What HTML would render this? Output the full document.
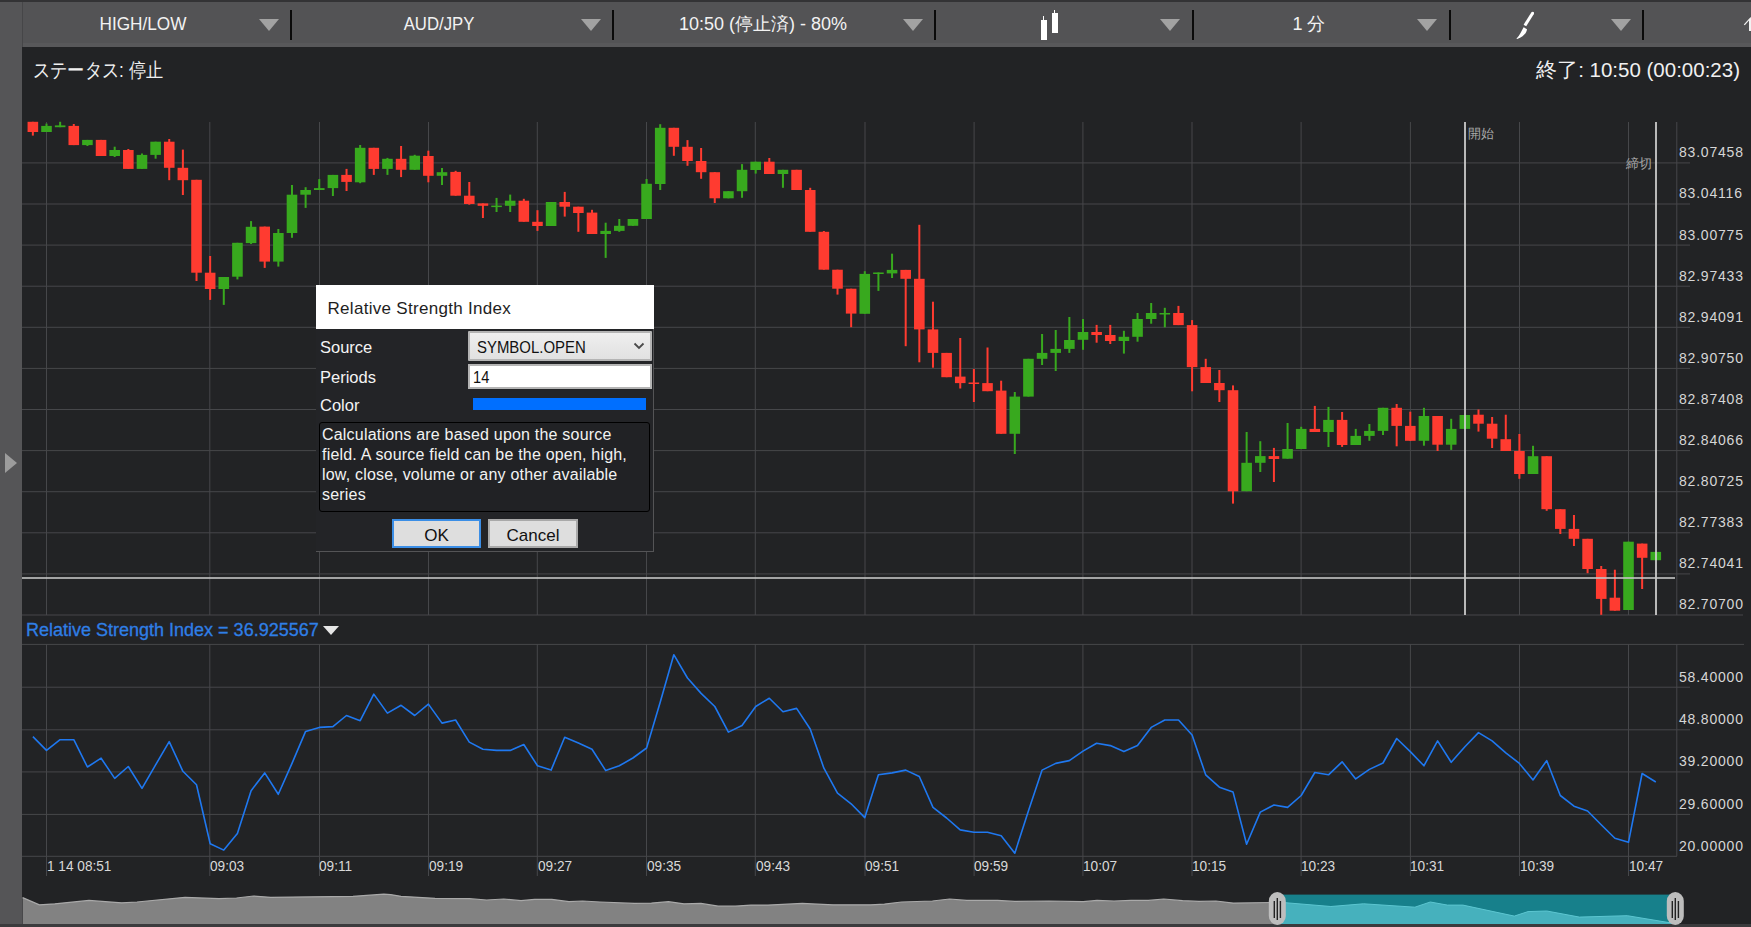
<!DOCTYPE html>
<html><head><meta charset="utf-8">
<style>
html,body{margin:0;padding:0;}
body{width:1751px;height:927px;overflow:hidden;background:#222325;position:relative;font-family:"Liberation Sans",sans-serif;}
.abs{position:absolute;}
#topstrip{position:absolute;left:0;top:0;width:1751px;height:2px;background:#333335;}
#side{position:absolute;left:0;top:2px;width:22px;height:922px;background:#555557;}
#side .tri{position:absolute;left:5px;top:451px;width:0;height:0;border-top:10.5px solid transparent;border-bottom:10.5px solid transparent;border-left:12px solid #9c9c9c;}
#bar{position:absolute;left:22px;top:2px;width:1729px;height:44.5px;background:#535355;}
.dd{position:absolute;top:0;height:44px;color:#f2f2f2;font-size:18px;line-height:44px;text-align:center;}
.tri-d{position:absolute;top:17px;width:0;height:0;border-left:10.5px solid transparent;border-right:10.5px solid transparent;border-top:12px solid #a2a2a2;}
.div{position:absolute;top:7.5px;width:2px;height:30px;background:#0a0a0a;}
svg{position:absolute;left:0;top:0;}
.tl{position:absolute;top:858px;font-size:14.5px;transform:scaleX(0.94);transform-origin:0 0;color:#d9d9d9;line-height:16px;white-space:nowrap;}
.pl{position:absolute;left:1679px;font-size:14px;color:#d6d6d6;line-height:16px;letter-spacing:0.8px;white-space:nowrap;}
#status{position:absolute;left:33px;top:58px;font-size:20px;color:#f0f0f0;line-height:24px;white-space:nowrap;transform:scaleX(0.86);transform-origin:0 0;}
#endt{position:absolute;right:11px;top:58px;font-size:20.5px;color:#f0f0f0;line-height:24px;white-space:nowrap;}
.mk{position:absolute;font-size:13px;color:#a9a9a9;line-height:14px;}
#rsil{position:absolute;left:26px;top:619px;font-size:18px;color:#2f7fe6;line-height:22px;white-space:nowrap;-webkit-text-stroke:0.3px #2f7fe6;}
#rsitri{position:absolute;left:323px;top:626px;width:0;height:0;border-left:8px solid transparent;border-right:8px solid transparent;border-top:9px solid #e6e6e6;}
#dlg{position:absolute;left:316px;top:285px;width:337px;height:266px;background:#232427;border-right:1px solid #545456;border-bottom:1px solid #545456;}
#dlg .title{position:absolute;left:0;top:0;width:338px;height:44px;background:#fff;color:#1e1e1e;font-size:17px;line-height:47px;letter-spacing:0.3px;}
#dlg .lab{position:absolute;left:4px;font-size:16.5px;color:#f4f4f4;line-height:20px;}
#dlg .sel{position:absolute;left:152px;top:46px;width:180px;height:26px;background:linear-gradient(#efefef,#e1e1e1);border:2px solid #b4b4b4;border-radius:1px;color:#111;font-size:16.5px;line-height:28px;}
#dlg .inp{position:absolute;left:152px;top:79px;width:180px;height:21px;background:#fff;border:2px solid #b4b4b4;color:#111;font-size:17px;line-height:24px;}
#dlg .color{position:absolute;left:157px;top:113px;width:173px;height:12px;background:#006fff;}
#dlg .desc{position:absolute;left:3px;top:137px;width:327px;height:88px;border:1px solid #000;border-radius:3px;background:#212225;color:#f2f2f2;font-size:16px;line-height:20px;padding:0 0 0 2px;white-space:nowrap;letter-spacing:0.2px;}
#dlg .btn{position:absolute;top:234px;height:25px;background:#dedede;border:2px solid #a9a9a9;color:#111;font-size:17px;line-height:29px;text-align:center;}
</style></head><body>
<div id="topstrip"></div>
<div id="bar">
  <div class="dd" style="left:61px;width:120px;transform:scaleX(0.956)">HIGH/LOW</div>
  <div class="tri-d" style="left:236.5px"></div>
  <div class="div" style="left:268px"></div>
  <div class="dd" style="left:356.5px;width:120px;transform:scaleX(0.93)">AUD/JPY</div>
  <div class="tri-d" style="left:558.5px"></div>
  <div class="div" style="left:590px"></div>
  <div class="dd" style="left:640px;width:202px">10:50 (停止済) - 80%</div>
  <div class="tri-d" style="left:880.5px"></div>
  <div class="div" style="left:912px"></div>
  <div class="abs" style="left:1021.3px;top:14px;width:1px;height:4px;background:#fff"></div>
  <div class="abs" style="left:1019.4px;top:18px;width:5.4px;height:19.7px;background:#fff"></div>
  <div class="abs" style="left:1031.6px;top:8px;width:1px;height:4px;background:#fff"></div>
  <div class="abs" style="left:1030px;top:11px;width:5.7px;height:20px;background:#fff"></div>
  <div class="tri-d" style="left:1138px"></div>
  <div class="div" style="left:1169.5px"></div>
  <div class="dd" style="left:1227px;width:120px">1 分</div>
  <div class="tri-d" style="left:1395px"></div>
  <div class="div" style="left:1427px"></div>
  <svg style="left:1490px;top:8px" width="22" height="32" viewBox="0 0 22 32"><path d="M21.9,4 L19.3,2.4 L11.6,14.7 L14.2,16.3 Z" fill="#fff"/><circle cx="20.6" cy="3.2" r="1.5" fill="#fff"/><path d="M11.6,17.2 L15,19.2 C14.6,23.2 10.8,27.3 5.2,29 C4.6,29.1 4.4,28.6 4.8,28.2 C7.6,25.4 9.4,21 11.6,17.2 Z" fill="#fff"/></svg>
  <div class="tri-d" style="left:1588.8px"></div>
  <div class="div" style="left:1620px"></div>
  <svg style="left:1715px;top:10px" width="14" height="22" viewBox="0 0 14 22"><path d="M6.8,12.4 L12.3,6.6 L13.8,5 L14,6.5 L14,19 L12,19 L12,8.6 L7.8,13.2 Z" fill="#f2f2f2"/></svg>
</div>
<div id="side"><div class="tri"></div></div>
<div class="abs" style="left:22px;top:2px;width:1px;height:45px;background:#464648"></div>
<div class="abs" style="left:23px;top:43px;width:1728px;height:4px;background:#58585a"></div>
<div id="status">ステータス: 停止</div>
<div id="endt">終了: 10:50 (00:00:23)</div>
<svg width="1751" height="927" viewBox="0 0 1751 927">
<rect x="46.0" y="122" width="1" height="493" fill="#46474a"/>
<rect x="46.0" y="644" width="1" height="232" fill="#46474a"/>
<rect x="209.3" y="122" width="1" height="493" fill="#46474a"/>
<rect x="209.3" y="644" width="1" height="232" fill="#46474a"/>
<rect x="319.0" y="122" width="1" height="493" fill="#46474a"/>
<rect x="319.0" y="644" width="1" height="232" fill="#46474a"/>
<rect x="428.0" y="122" width="1" height="493" fill="#46474a"/>
<rect x="428.0" y="644" width="1" height="232" fill="#46474a"/>
<rect x="536.8" y="122" width="1" height="493" fill="#46474a"/>
<rect x="536.8" y="644" width="1" height="232" fill="#46474a"/>
<rect x="646.0" y="122" width="1" height="493" fill="#46474a"/>
<rect x="646.0" y="644" width="1" height="232" fill="#46474a"/>
<rect x="754.8" y="122" width="1" height="493" fill="#46474a"/>
<rect x="754.8" y="644" width="1" height="232" fill="#46474a"/>
<rect x="864.5" y="122" width="1" height="493" fill="#46474a"/>
<rect x="864.5" y="644" width="1" height="232" fill="#46474a"/>
<rect x="973.6" y="122" width="1" height="493" fill="#46474a"/>
<rect x="973.6" y="644" width="1" height="232" fill="#46474a"/>
<rect x="1082.4" y="122" width="1" height="493" fill="#46474a"/>
<rect x="1082.4" y="644" width="1" height="232" fill="#46474a"/>
<rect x="1191.5" y="122" width="1" height="493" fill="#46474a"/>
<rect x="1191.5" y="644" width="1" height="232" fill="#46474a"/>
<rect x="1300.6" y="122" width="1" height="493" fill="#46474a"/>
<rect x="1300.6" y="644" width="1" height="232" fill="#46474a"/>
<rect x="1409.9" y="122" width="1" height="493" fill="#46474a"/>
<rect x="1409.9" y="644" width="1" height="232" fill="#46474a"/>
<rect x="1519.0" y="122" width="1" height="493" fill="#46474a"/>
<rect x="1519.0" y="644" width="1" height="232" fill="#46474a"/>
<rect x="1628.0" y="122" width="1" height="493" fill="#46474a"/>
<rect x="1628.0" y="644" width="1" height="232" fill="#46474a"/>
<rect x="22" y="162.40" width="1668" height="1" fill="#46474a"/>
<rect x="22" y="203.50" width="1668" height="1" fill="#46474a"/>
<rect x="22" y="244.60" width="1668" height="1" fill="#46474a"/>
<rect x="22" y="285.70" width="1668" height="1" fill="#46474a"/>
<rect x="22" y="326.80" width="1668" height="1" fill="#46474a"/>
<rect x="22" y="367.90" width="1668" height="1" fill="#46474a"/>
<rect x="22" y="409.00" width="1668" height="1" fill="#46474a"/>
<rect x="22" y="450.10" width="1668" height="1" fill="#46474a"/>
<rect x="22" y="491.20" width="1668" height="1" fill="#46474a"/>
<rect x="22" y="532.30" width="1668" height="1" fill="#46474a"/>
<rect x="22" y="573.40" width="1668" height="1" fill="#46474a"/>
<rect x="22" y="614.5" width="1721" height="1" fill="#46474a"/>
<rect x="22" y="643.9" width="1722" height="1" fill="#46474a"/>
<rect x="22" y="686.7" width="1668" height="1" fill="#46474a"/>
<rect x="22" y="729.3" width="1668" height="1" fill="#46474a"/>
<rect x="22" y="771.4" width="1668" height="1" fill="#46474a"/>
<rect x="22" y="813.9" width="1668" height="1" fill="#46474a"/>
<rect x="22" y="855.8" width="1655" height="1" fill="#46474a"/>
<rect x="1676.3" y="122" width="1" height="493" fill="#46474a"/>
<rect x="1676.3" y="644" width="1" height="212" fill="#46474a"/>
<rect x="31.86" y="121.8" width="2" height="13.8" fill="#ff3b30"/>
<rect x="27.56" y="121.8" width="10.6" height="10.2" fill="#ff3b30"/>
<rect x="45.50" y="123.6" width="2" height="8.4" fill="#38a91e"/>
<rect x="41.20" y="125.9" width="10.6" height="6.1" fill="#38a91e"/>
<rect x="59.14" y="121.8" width="2" height="5.4" fill="#38a91e"/>
<rect x="54.84" y="125.4" width="10.6" height="1.8" fill="#38a91e"/>
<rect x="72.78" y="124.0" width="2" height="21.1" fill="#ff3b30"/>
<rect x="68.48" y="125.9" width="10.6" height="19.2" fill="#ff3b30"/>
<rect x="86.41" y="139.9" width="2" height="6.1" fill="#38a91e"/>
<rect x="82.11" y="139.9" width="10.6" height="5.2" fill="#38a91e"/>
<rect x="100.05" y="139.9" width="2" height="16.1" fill="#ff3b30"/>
<rect x="95.75" y="139.9" width="10.6" height="16.1" fill="#ff3b30"/>
<rect x="113.69" y="146.7" width="2" height="10.3" fill="#38a91e"/>
<rect x="109.39" y="150.0" width="10.6" height="6.0" fill="#38a91e"/>
<rect x="127.33" y="149.0" width="2" height="19.9" fill="#ff3b30"/>
<rect x="123.03" y="150.0" width="10.6" height="18.9" fill="#ff3b30"/>
<rect x="140.97" y="153.5" width="2" height="15.4" fill="#38a91e"/>
<rect x="136.67" y="154.9" width="10.6" height="14.0" fill="#38a91e"/>
<rect x="154.60" y="141.7" width="2" height="17.0" fill="#38a91e"/>
<rect x="150.30" y="141.7" width="10.6" height="13.2" fill="#38a91e"/>
<rect x="168.24" y="139.0" width="2" height="41.2" fill="#ff3b30"/>
<rect x="163.94" y="141.7" width="10.6" height="26.1" fill="#ff3b30"/>
<rect x="181.88" y="149.6" width="2" height="45.4" fill="#ff3b30"/>
<rect x="177.58" y="167.8" width="10.6" height="12.4" fill="#ff3b30"/>
<rect x="195.52" y="179.8" width="2" height="101.2" fill="#ff3b30"/>
<rect x="191.22" y="179.8" width="10.6" height="92.9" fill="#ff3b30"/>
<rect x="209.16" y="256.0" width="2" height="43.9" fill="#ff3b30"/>
<rect x="204.86" y="272.7" width="10.6" height="16.3" fill="#ff3b30"/>
<rect x="222.79" y="277.0" width="2" height="27.9" fill="#38a91e"/>
<rect x="218.49" y="277.0" width="10.6" height="12.0" fill="#38a91e"/>
<rect x="236.43" y="242.8" width="2" height="36.6" fill="#38a91e"/>
<rect x="232.13" y="242.8" width="10.6" height="33.9" fill="#38a91e"/>
<rect x="250.07" y="221.1" width="2" height="22.9" fill="#38a91e"/>
<rect x="245.77" y="226.8" width="10.6" height="16.3" fill="#38a91e"/>
<rect x="263.71" y="226.6" width="2" height="41.3" fill="#ff3b30"/>
<rect x="259.41" y="226.6" width="10.6" height="35.0" fill="#ff3b30"/>
<rect x="277.35" y="229.0" width="2" height="37.6" fill="#38a91e"/>
<rect x="273.05" y="233.0" width="10.6" height="28.6" fill="#38a91e"/>
<rect x="290.98" y="185.0" width="2" height="52.8" fill="#38a91e"/>
<rect x="286.68" y="194.7" width="10.6" height="38.3" fill="#38a91e"/>
<rect x="304.62" y="187.2" width="2" height="20.7" fill="#38a91e"/>
<rect x="300.32" y="190.0" width="10.6" height="4.7" fill="#38a91e"/>
<rect x="318.26" y="179.1" width="2" height="10.9" fill="#38a91e"/>
<rect x="313.96" y="188.1" width="10.6" height="1.9" fill="#38a91e"/>
<rect x="331.90" y="174.9" width="2" height="21.1" fill="#38a91e"/>
<rect x="327.60" y="174.9" width="10.6" height="13.2" fill="#38a91e"/>
<rect x="345.54" y="168.9" width="2" height="22.1" fill="#ff3b30"/>
<rect x="341.24" y="174.9" width="10.6" height="7.0" fill="#ff3b30"/>
<rect x="359.17" y="145.0" width="2" height="38.2" fill="#38a91e"/>
<rect x="354.87" y="147.8" width="10.6" height="34.5" fill="#38a91e"/>
<rect x="372.81" y="147.8" width="2" height="27.1" fill="#ff3b30"/>
<rect x="368.51" y="147.8" width="10.6" height="21.1" fill="#ff3b30"/>
<rect x="386.45" y="157.9" width="2" height="17.0" fill="#38a91e"/>
<rect x="382.15" y="158.8" width="10.6" height="10.1" fill="#38a91e"/>
<rect x="400.09" y="146.0" width="2" height="31.1" fill="#ff3b30"/>
<rect x="395.79" y="158.8" width="10.6" height="11.0" fill="#ff3b30"/>
<rect x="413.73" y="154.8" width="2" height="15.0" fill="#38a91e"/>
<rect x="409.43" y="155.7" width="10.6" height="14.1" fill="#38a91e"/>
<rect x="427.36" y="150.7" width="2" height="31.6" fill="#ff3b30"/>
<rect x="423.06" y="156.0" width="10.6" height="19.8" fill="#ff3b30"/>
<rect x="441.00" y="168.0" width="2" height="17.0" fill="#38a91e"/>
<rect x="436.70" y="172.2" width="10.6" height="3.6" fill="#38a91e"/>
<rect x="454.64" y="170.8" width="2" height="24.9" fill="#ff3b30"/>
<rect x="450.34" y="171.9" width="10.6" height="23.8" fill="#ff3b30"/>
<rect x="468.28" y="182.0" width="2" height="22.7" fill="#ff3b30"/>
<rect x="463.98" y="195.7" width="10.6" height="8.3" fill="#ff3b30"/>
<rect x="481.92" y="203.4" width="2" height="14.6" fill="#ff3b30"/>
<rect x="477.62" y="203.4" width="10.6" height="2.4" fill="#ff3b30"/>
<rect x="495.55" y="197.9" width="2" height="14.1" fill="#38a91e"/>
<rect x="491.25" y="205.6" width="10.6" height="1.5" fill="#38a91e"/>
<rect x="509.19" y="194.6" width="2" height="17.4" fill="#38a91e"/>
<rect x="504.89" y="200.7" width="10.6" height="5.1" fill="#38a91e"/>
<rect x="522.83" y="198.8" width="2" height="22.9" fill="#ff3b30"/>
<rect x="518.53" y="200.7" width="10.6" height="21.1" fill="#ff3b30"/>
<rect x="536.47" y="210.2" width="2" height="20.7" fill="#ff3b30"/>
<rect x="532.17" y="221.8" width="10.6" height="4.2" fill="#ff3b30"/>
<rect x="550.11" y="202.0" width="2" height="24.0" fill="#38a91e"/>
<rect x="545.81" y="202.0" width="10.6" height="24.0" fill="#38a91e"/>
<rect x="563.74" y="191.9" width="2" height="24.7" fill="#ff3b30"/>
<rect x="559.44" y="202.0" width="10.6" height="4.7" fill="#ff3b30"/>
<rect x="577.38" y="206.7" width="2" height="25.1" fill="#ff3b30"/>
<rect x="573.08" y="206.7" width="10.6" height="6.3" fill="#ff3b30"/>
<rect x="591.02" y="209.8" width="2" height="24.2" fill="#ff3b30"/>
<rect x="586.72" y="212.6" width="10.6" height="21.4" fill="#ff3b30"/>
<rect x="604.66" y="222.7" width="2" height="35.2" fill="#38a91e"/>
<rect x="600.36" y="230.9" width="10.6" height="3.1" fill="#38a91e"/>
<rect x="618.30" y="219.0" width="2" height="12.8" fill="#38a91e"/>
<rect x="614.00" y="225.8" width="10.6" height="5.1" fill="#38a91e"/>
<rect x="631.93" y="219.0" width="2" height="6.8" fill="#38a91e"/>
<rect x="627.63" y="219.0" width="10.6" height="6.8" fill="#38a91e"/>
<rect x="645.57" y="179.0" width="2" height="40.0" fill="#38a91e"/>
<rect x="641.27" y="183.8" width="10.6" height="35.2" fill="#38a91e"/>
<rect x="659.21" y="124.2" width="2" height="65.8" fill="#38a91e"/>
<rect x="654.91" y="127.8" width="10.6" height="56.2" fill="#38a91e"/>
<rect x="672.85" y="127.8" width="2" height="28.0" fill="#ff3b30"/>
<rect x="668.55" y="127.8" width="10.6" height="19.0" fill="#ff3b30"/>
<rect x="686.49" y="140.1" width="2" height="25.7" fill="#ff3b30"/>
<rect x="682.19" y="146.8" width="10.6" height="14.2" fill="#ff3b30"/>
<rect x="700.12" y="148.0" width="2" height="30.8" fill="#ff3b30"/>
<rect x="695.82" y="161.0" width="10.6" height="11.2" fill="#ff3b30"/>
<rect x="713.76" y="172.2" width="2" height="30.8" fill="#ff3b30"/>
<rect x="709.46" y="172.2" width="10.6" height="26.1" fill="#ff3b30"/>
<rect x="727.40" y="191.2" width="2" height="7.1" fill="#38a91e"/>
<rect x="723.10" y="191.2" width="10.6" height="7.1" fill="#38a91e"/>
<rect x="741.04" y="164.1" width="2" height="33.7" fill="#38a91e"/>
<rect x="736.74" y="169.8" width="10.6" height="21.4" fill="#38a91e"/>
<rect x="754.68" y="161.7" width="2" height="11.9" fill="#38a91e"/>
<rect x="750.38" y="161.7" width="10.6" height="8.3" fill="#38a91e"/>
<rect x="768.31" y="158.0" width="2" height="16.0" fill="#ff3b30"/>
<rect x="764.01" y="161.7" width="10.6" height="12.3" fill="#ff3b30"/>
<rect x="781.95" y="169.8" width="2" height="18.0" fill="#38a91e"/>
<rect x="777.65" y="169.8" width="10.6" height="4.2" fill="#38a91e"/>
<rect x="795.59" y="169.8" width="2" height="20.2" fill="#ff3b30"/>
<rect x="791.29" y="169.8" width="10.6" height="20.2" fill="#ff3b30"/>
<rect x="809.23" y="187.8" width="2" height="43.9" fill="#ff3b30"/>
<rect x="804.93" y="190.0" width="10.6" height="41.8" fill="#ff3b30"/>
<rect x="822.87" y="231.0" width="2" height="38.7" fill="#ff3b30"/>
<rect x="818.57" y="231.8" width="10.6" height="37.9" fill="#ff3b30"/>
<rect x="836.50" y="269.7" width="2" height="24.9" fill="#ff3b30"/>
<rect x="832.20" y="269.7" width="10.6" height="19.0" fill="#ff3b30"/>
<rect x="850.14" y="288.7" width="2" height="38.5" fill="#ff3b30"/>
<rect x="845.84" y="288.7" width="10.6" height="24.9" fill="#ff3b30"/>
<rect x="863.78" y="271.2" width="2" height="42.6" fill="#38a91e"/>
<rect x="859.48" y="273.9" width="10.6" height="39.9" fill="#38a91e"/>
<rect x="877.42" y="272.5" width="2" height="18.4" fill="#38a91e"/>
<rect x="873.12" y="272.5" width="10.6" height="1.5" fill="#38a91e"/>
<rect x="891.06" y="253.7" width="2" height="24.3" fill="#38a91e"/>
<rect x="886.76" y="269.9" width="10.6" height="3.5" fill="#38a91e"/>
<rect x="904.69" y="269.9" width="2" height="76.3" fill="#ff3b30"/>
<rect x="900.39" y="269.9" width="10.6" height="8.9" fill="#ff3b30"/>
<rect x="918.33" y="224.8" width="2" height="137.5" fill="#ff3b30"/>
<rect x="914.03" y="278.8" width="10.6" height="50.6" fill="#ff3b30"/>
<rect x="931.97" y="301.7" width="2" height="66.0" fill="#ff3b30"/>
<rect x="927.67" y="329.4" width="10.6" height="23.5" fill="#ff3b30"/>
<rect x="945.61" y="352.9" width="2" height="24.3" fill="#ff3b30"/>
<rect x="941.31" y="352.9" width="10.6" height="24.3" fill="#ff3b30"/>
<rect x="959.25" y="338.0" width="2" height="50.5" fill="#ff3b30"/>
<rect x="954.95" y="376.6" width="10.6" height="6.5" fill="#ff3b30"/>
<rect x="972.88" y="369.0" width="2" height="33.0" fill="#ff3b30"/>
<rect x="968.58" y="382.5" width="10.6" height="1.5" fill="#ff3b30"/>
<rect x="986.52" y="347.5" width="2" height="43.7" fill="#ff3b30"/>
<rect x="982.22" y="383.1" width="10.6" height="8.1" fill="#ff3b30"/>
<rect x="1000.16" y="380.7" width="2" height="53.1" fill="#ff3b30"/>
<rect x="995.86" y="390.6" width="10.6" height="43.2" fill="#ff3b30"/>
<rect x="1013.80" y="392.0" width="2" height="62.0" fill="#38a91e"/>
<rect x="1009.50" y="396.6" width="10.6" height="37.2" fill="#38a91e"/>
<rect x="1027.44" y="358.8" width="2" height="37.8" fill="#38a91e"/>
<rect x="1023.14" y="358.8" width="10.6" height="37.8" fill="#38a91e"/>
<rect x="1041.07" y="334.0" width="2" height="31.0" fill="#38a91e"/>
<rect x="1036.77" y="352.9" width="10.6" height="5.9" fill="#38a91e"/>
<rect x="1054.71" y="330.0" width="2" height="41.0" fill="#38a91e"/>
<rect x="1050.41" y="348.9" width="10.6" height="4.0" fill="#38a91e"/>
<rect x="1068.35" y="317.0" width="2" height="35.9" fill="#38a91e"/>
<rect x="1064.05" y="340.0" width="10.6" height="8.9" fill="#38a91e"/>
<rect x="1081.99" y="319.0" width="2" height="30.8" fill="#38a91e"/>
<rect x="1077.69" y="332.0" width="10.6" height="7.8" fill="#38a91e"/>
<rect x="1095.63" y="324.9" width="2" height="17.8" fill="#ff3b30"/>
<rect x="1091.33" y="332.0" width="10.6" height="3.0" fill="#ff3b30"/>
<rect x="1109.26" y="324.9" width="2" height="19.1" fill="#ff3b30"/>
<rect x="1104.96" y="335.0" width="10.6" height="6.0" fill="#ff3b30"/>
<rect x="1122.90" y="330.8" width="2" height="22.8" fill="#38a91e"/>
<rect x="1118.60" y="336.8" width="10.6" height="4.2" fill="#38a91e"/>
<rect x="1136.54" y="313.0" width="2" height="28.7" fill="#38a91e"/>
<rect x="1132.24" y="319.0" width="10.6" height="17.8" fill="#38a91e"/>
<rect x="1150.18" y="303.0" width="2" height="20.7" fill="#38a91e"/>
<rect x="1145.88" y="313.0" width="10.6" height="6.0" fill="#38a91e"/>
<rect x="1163.82" y="307.8" width="2" height="19.5" fill="#38a91e"/>
<rect x="1159.52" y="313.0" width="10.6" height="1.5" fill="#38a91e"/>
<rect x="1177.45" y="305.9" width="2" height="19.2" fill="#ff3b30"/>
<rect x="1173.15" y="313.0" width="10.6" height="12.1" fill="#ff3b30"/>
<rect x="1191.09" y="320.1" width="2" height="71.2" fill="#ff3b30"/>
<rect x="1186.79" y="325.1" width="10.6" height="42.0" fill="#ff3b30"/>
<rect x="1204.73" y="358.8" width="2" height="24.2" fill="#ff3b30"/>
<rect x="1200.43" y="367.1" width="10.6" height="15.9" fill="#ff3b30"/>
<rect x="1218.37" y="370.0" width="2" height="32.0" fill="#ff3b30"/>
<rect x="1214.07" y="383.0" width="10.6" height="7.2" fill="#ff3b30"/>
<rect x="1232.01" y="385.4" width="2" height="118.2" fill="#ff3b30"/>
<rect x="1227.71" y="390.2" width="10.6" height="101.1" fill="#ff3b30"/>
<rect x="1245.64" y="432.0" width="2" height="59.2" fill="#38a91e"/>
<rect x="1241.34" y="462.8" width="10.6" height="28.4" fill="#38a91e"/>
<rect x="1259.28" y="441.2" width="2" height="30.8" fill="#38a91e"/>
<rect x="1254.98" y="456.1" width="10.6" height="6.7" fill="#38a91e"/>
<rect x="1272.92" y="447.9" width="2" height="34.1" fill="#ff3b30"/>
<rect x="1268.62" y="456.1" width="10.6" height="2.9" fill="#ff3b30"/>
<rect x="1286.56" y="423.0" width="2" height="35.7" fill="#38a91e"/>
<rect x="1282.26" y="449.0" width="10.6" height="9.7" fill="#38a91e"/>
<rect x="1300.20" y="426.8" width="2" height="22.2" fill="#38a91e"/>
<rect x="1295.90" y="428.9" width="10.6" height="20.1" fill="#38a91e"/>
<rect x="1313.83" y="405.9" width="2" height="26.1" fill="#ff3b30"/>
<rect x="1309.53" y="428.9" width="10.6" height="3.1" fill="#ff3b30"/>
<rect x="1327.47" y="406.9" width="2" height="40.1" fill="#38a91e"/>
<rect x="1323.17" y="419.9" width="10.6" height="12.1" fill="#38a91e"/>
<rect x="1341.11" y="412.0" width="2" height="34.9" fill="#ff3b30"/>
<rect x="1336.81" y="419.9" width="10.6" height="25.1" fill="#ff3b30"/>
<rect x="1354.75" y="428.9" width="2" height="16.1" fill="#38a91e"/>
<rect x="1350.45" y="435.9" width="10.6" height="9.1" fill="#38a91e"/>
<rect x="1368.39" y="424.0" width="2" height="16.8" fill="#38a91e"/>
<rect x="1364.09" y="430.9" width="10.6" height="5.0" fill="#38a91e"/>
<rect x="1382.02" y="407.8" width="2" height="27.2" fill="#38a91e"/>
<rect x="1377.72" y="407.8" width="10.6" height="23.1" fill="#38a91e"/>
<rect x="1395.66" y="404.0" width="2" height="42.3" fill="#ff3b30"/>
<rect x="1391.36" y="407.8" width="10.6" height="18.1" fill="#ff3b30"/>
<rect x="1409.30" y="411.7" width="2" height="29.1" fill="#ff3b30"/>
<rect x="1405.00" y="425.9" width="10.6" height="14.9" fill="#ff3b30"/>
<rect x="1422.94" y="407.8" width="2" height="37.9" fill="#38a91e"/>
<rect x="1418.64" y="416.0" width="10.6" height="24.8" fill="#38a91e"/>
<rect x="1436.58" y="416.0" width="2" height="35.0" fill="#ff3b30"/>
<rect x="1432.28" y="416.0" width="10.6" height="28.7" fill="#ff3b30"/>
<rect x="1450.21" y="418.8" width="2" height="31.1" fill="#38a91e"/>
<rect x="1445.91" y="428.9" width="10.6" height="15.8" fill="#38a91e"/>
<rect x="1463.85" y="415.0" width="2" height="13.9" fill="#38a91e"/>
<rect x="1459.55" y="415.0" width="10.6" height="13.9" fill="#38a91e"/>
<rect x="1477.49" y="409.5" width="2" height="22.1" fill="#ff3b30"/>
<rect x="1473.19" y="414.7" width="10.6" height="9.0" fill="#ff3b30"/>
<rect x="1491.13" y="417.0" width="2" height="31.0" fill="#ff3b30"/>
<rect x="1486.83" y="423.7" width="10.6" height="15.0" fill="#ff3b30"/>
<rect x="1504.77" y="414.7" width="2" height="36.3" fill="#ff3b30"/>
<rect x="1500.47" y="439.2" width="10.6" height="11.8" fill="#ff3b30"/>
<rect x="1518.40" y="434.0" width="2" height="44.8" fill="#ff3b30"/>
<rect x="1514.10" y="451.0" width="10.6" height="23.0" fill="#ff3b30"/>
<rect x="1532.04" y="445.8" width="2" height="28.2" fill="#38a91e"/>
<rect x="1527.74" y="456.2" width="10.6" height="17.8" fill="#38a91e"/>
<rect x="1545.68" y="456.2" width="2" height="54.6" fill="#ff3b30"/>
<rect x="1541.38" y="456.2" width="10.6" height="53.0" fill="#ff3b30"/>
<rect x="1559.32" y="509.2" width="2" height="24.8" fill="#ff3b30"/>
<rect x="1555.02" y="509.2" width="10.6" height="19.7" fill="#ff3b30"/>
<rect x="1572.96" y="515.0" width="2" height="31.0" fill="#ff3b30"/>
<rect x="1568.66" y="528.9" width="10.6" height="9.9" fill="#ff3b30"/>
<rect x="1586.59" y="538.8" width="2" height="34.4" fill="#ff3b30"/>
<rect x="1582.29" y="538.8" width="10.6" height="30.2" fill="#ff3b30"/>
<rect x="1600.23" y="566.0" width="2" height="48.8" fill="#ff3b30"/>
<rect x="1595.93" y="569.0" width="10.6" height="29.9" fill="#ff3b30"/>
<rect x="1613.87" y="569.7" width="2" height="41.0" fill="#ff3b30"/>
<rect x="1609.57" y="597.7" width="10.6" height="13.0" fill="#ff3b30"/>
<rect x="1627.51" y="541.7" width="2" height="68.3" fill="#38a91e"/>
<rect x="1623.21" y="541.7" width="10.6" height="68.3" fill="#38a91e"/>
<rect x="1641.15" y="543.6" width="2" height="45.4" fill="#ff3b30"/>
<rect x="1636.85" y="543.6" width="10.6" height="14.2" fill="#ff3b30"/>
<rect x="1654.78" y="551.9" width="2" height="8.3" fill="#38a91e"/>
<rect x="1650.48" y="551.9" width="10.6" height="8.3" fill="#38a91e"/>
<rect x="1464" y="122" width="2" height="493" fill="#d4d4d4" fill-opacity="0.85"/>
<rect x="1655" y="122" width="2" height="493" fill="#d4d4d4" fill-opacity="0.85"/>
<rect x="22" y="577" width="1653" height="2" fill="#c4c4c4" fill-opacity="0.8"/>
<polyline points="32.9,736.6 46.5,750.4 60.1,739.7 73.8,739.7 87.4,767 101.1,758.2 114.7,778.4 128.3,766.5 142.0,788.4 155.6,764.9 169.2,741.6 182.9,771.3 196.5,784.8 210.2,843.7 223.8,850.1 237.4,833.5 251.1,790.7 264.7,772.9 278.3,794.3 292.0,763.4 305.6,731.4 319.3,727.4 332.9,726.6 346.5,715.5 360.2,720.7 373.8,694.1 387.4,713.1 401.1,705.3 414.7,715.5 428.4,704.1 442.0,723.1 455.6,720 469.3,742.1 482.9,749.2 496.6,750.4 510.2,750.4 523.8,744.5 537.5,765.8 551.1,770.1 564.7,737.3 578.4,743 592.0,749.2 605.7,770.6 619.3,765.8 632.9,758 646.6,748 660.2,702.2 673.8,654.7 687.5,678 701.1,693.4 714.8,706.5 728.4,732.1 742.0,725.5 755.7,706.5 769.3,698.2 783.0,711.7 796.6,708.4 810.2,729 823.9,768.2 837.5,793.1 851.1,803.8 864.8,817.6 878.4,774.8 892.1,772.9 905.7,770.1 919.3,776.5 933.0,807.4 946.6,818 960.2,829.9 973.9,832.3 987.5,832.3 1001.2,835.8 1014.8,853.2 1028.4,811 1042.1,770.1 1055.7,763.4 1069.3,760.6 1083.0,751.1 1096.6,743.3 1110.3,745.6 1123.9,751.6 1137.5,745.6 1151.2,727.4 1164.8,720 1178.5,720 1192.1,735 1205.7,774.8 1219.4,787.2 1233.0,791.9 1246.6,844.2 1260.3,812.1 1273.9,805 1287.6,807.4 1301.2,795.5 1314.8,772.5 1328.5,774.8 1342.1,761.8 1355.7,778.9 1369.4,769.4 1383.0,763 1396.7,738.5 1410.3,751.6 1423.9,765.8 1437.6,740.9 1451.2,762.3 1464.9,746.8 1478.5,732.6 1492.1,740.9 1505.8,752.8 1519.4,763.4 1533.0,780 1546.7,760.6 1560.3,795.5 1574.0,806.2 1587.6,811 1601.2,824.7 1614.9,838.3 1628.5,842.3 1642.1,773.5 1655.8,782" fill="none" stroke="#1f78f0" stroke-width="1.6" stroke-linejoin="round"/>
<polygon points="22.6,924 22.6,897.6 39.4,904.8 54.8,903.8 89,900.4 121.7,902.8 137,902 185,897.3 219,898.7 236.5,898 253.6,896 270.7,897.3 353,896.3 383.8,894.2 390.7,894.6 401,896.3 435,898.3 469.5,898.7 486.6,900 503.8,899 521,900.7 534.6,899.3 551.8,899.3 568.9,901.7 582.6,901 600,902 634.3,903.4 651.4,903.1 668.5,901.7 684,903.8 701,903.4 718.2,906.2 735.4,906.2 750.8,905.1 767.9,905.1 802.2,903.4 833,904.8 870.7,904.8 884.4,904.1 901.6,902 932.4,901 949.6,899 966.7,900.4 997.5,900.4 1014.7,901.4 1049,901 1083.2,901.7 1097,900.4 1114,901 1131,900.4 1148.3,900.4 1163.7,899 1182.6,900.7 1199,901.4 1216,901 1233.2,903.1 1277,902.4 1277,924" fill="#828282"/>
<polyline points="22.6,897.6 39.4,904.8 54.8,903.8 89,900.4 121.7,902.8 137,902 185,897.3 219,898.7 236.5,898 253.6,896 270.7,897.3 353,896.3 383.8,894.2 390.7,894.6 401,896.3 435,898.3 469.5,898.7 486.6,900 503.8,899 521,900.7 534.6,899.3 551.8,899.3 568.9,901.7 582.6,901 600,902 634.3,903.4 651.4,903.1 668.5,901.7 684,903.8 701,903.4 718.2,906.2 735.4,906.2 750.8,905.1 767.9,905.1 802.2,903.4 833,904.8 870.7,904.8 884.4,904.1 901.6,902 932.4,901 949.6,899 966.7,900.4 997.5,900.4 1014.7,901.4 1049,901 1083.2,901.7 1097,900.4 1114,901 1131,900.4 1148.3,900.4 1163.7,899 1182.6,900.7 1199,901.4 1216,901 1233.2,903.1 1277,902.4" fill="none" stroke="#a9a9a9" stroke-width="1.2"/>
<rect x="1277" y="894.6" width="398" height="29.4" fill="#17808b"/>
<polygon points="1277,902 1330.9,906.5 1363.5,903.8 1414.9,907.2 1430.3,902 1447.4,905.1 1462.9,905.1 1514.3,916.1 1528,911.6 1546.8,911 1579.4,917.1 1627.3,915.7 1675,923.6 1675,924 1277,924" fill="#46b1bd"/>
<polyline points="1277,902 1330.9,906.5 1363.5,903.8 1414.9,907.2 1430.3,902 1447.4,905.1 1462.9,905.1 1514.3,916.1 1528,911.6 1546.8,911 1579.4,917.1 1627.3,915.7 1675,923.6" fill="none" stroke="#5cc6d1" stroke-width="1"/>
<rect x="0" y="924" width="1751" height="3" fill="#3b3b3d"/>
<rect x="1268.8" y="892" width="17" height="33" rx="8.5" ry="9" fill="#bdbdbd"/>
<rect x="1273.6" y="901" width="1.4" height="17" fill="#222"/>
<rect x="1276.6" y="898" width="1.4" height="22" fill="#222"/>
<rect x="1279.7" y="901" width="1.4" height="17" fill="#222"/>
<rect x="1666.8" y="892" width="17" height="33" rx="8.5" ry="9" fill="#bdbdbd"/>
<rect x="1671.6" y="901" width="1.4" height="17" fill="#222"/>
<rect x="1674.6" y="898" width="1.4" height="22" fill="#222"/>
<rect x="1677.7" y="901" width="1.4" height="17" fill="#222"/>
</svg>
<div class="mk" style="left:1468px;top:127px">開始</div>
<div class="mk" style="left:1626px;top:157px">締切</div>
<div class="pl" style="top:144.3px">83.07458</div>
<div class="pl" style="top:185.4px">83.04116</div>
<div class="pl" style="top:226.5px">83.00775</div>
<div class="pl" style="top:267.6px">82.97433</div>
<div class="pl" style="top:308.7px">82.94091</div>
<div class="pl" style="top:349.8px">82.90750</div>
<div class="pl" style="top:390.9px">82.87408</div>
<div class="pl" style="top:432.0px">82.84066</div>
<div class="pl" style="top:473.1px">82.80725</div>
<div class="pl" style="top:514.2px">82.77383</div>
<div class="pl" style="top:555.3px">82.74041</div>
<div class="pl" style="top:596.4px">82.70700</div>
<div class="pl" style="top:669.4px">58.40000</div>
<div class="pl" style="top:711.0px">48.80000</div>
<div class="pl" style="top:752.6px">39.20000</div>
<div class="pl" style="top:795.9px">29.60000</div>
<div class="pl" style="top:837.5px">20.00000</div>
<div class="tl" style="left:46.6px">1 14 08:51</div>
<div class="tl" style="left:210.3px">09:03</div>
<div class="tl" style="left:319.4px">09:11</div>
<div class="tl" style="left:428.5px">09:19</div>
<div class="tl" style="left:537.6px">09:27</div>
<div class="tl" style="left:646.7px">09:35</div>
<div class="tl" style="left:755.8px">09:43</div>
<div class="tl" style="left:864.9px">09:51</div>
<div class="tl" style="left:974.0px">09:59</div>
<div class="tl" style="left:1083.1px">10:07</div>
<div class="tl" style="left:1192.2px">10:15</div>
<div class="tl" style="left:1301.3px">10:23</div>
<div class="tl" style="left:1410.4px">10:31</div>
<div class="tl" style="left:1519.5px">10:39</div>
<div class="tl" style="left:1628.6px">10:47</div>
<div id="rsil">Relative Strength Index = 36.925567</div>
<div id="rsitri"></div>
<div id="dlg">
  <div class="title"><span style="margin-left:11.5px">Relative Strength Index</span></div>
  <div class="lab" style="top:52px">Source</div>
  <div class="sel"><span style="position:absolute;left:7px;top:0;transform:scaleX(0.905);transform-origin:0 0;white-space:nowrap">SYMBOL.OPEN</span><svg style="left:163px;top:9px" width="12" height="8" viewBox="0 0 12 8"><path d="M1.5,1.5 L6,6 L10.5,1.5" fill="none" stroke="#4a4a4a" stroke-width="1.8"/></svg></div>
  <div class="lab" style="top:82px">Periods</div>
  <div class="inp"><span style="position:absolute;left:3px;top:0;transform:scaleX(0.86);transform-origin:0 0">14</span></div>
  <div class="lab" style="top:110px">Color</div>
  <div class="color"></div>
  <div class="desc"><div style="margin-top:2px">Calculations are based upon the source</div><div>field. A source field can be the open, high,</div><div>low, close, volume or any other available</div><div>series</div></div>
  <div class="btn" style="left:76px;width:85px;border-color:#3b8ee6">OK</div>
  <div class="btn" style="left:172px;width:86px">Cancel</div>
</div>
</body></html>
